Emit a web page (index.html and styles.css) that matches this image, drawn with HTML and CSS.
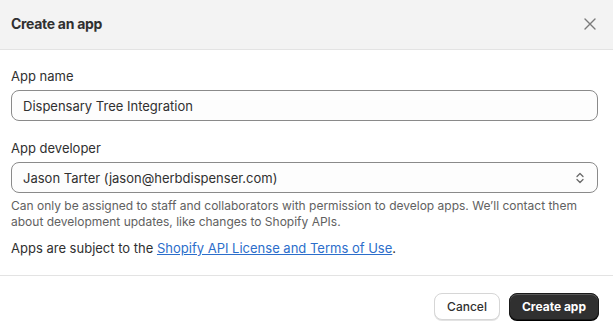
FILE: index.html
```html
<!DOCTYPE html>
<html>
<head>
<meta charset="utf-8">
<link rel="stylesheet" href="styles.css">
</head>
<body>
<div class="modal">
  <div class="header">
    <h1 class="title">Create an app</h1>
    <button class="close" aria-label="Close">
      <svg width="12" height="12" viewBox="0 0 12 12"><path d="M1 1L11 11M11 1L1 11" stroke="#7a7a7a" stroke-width="1.4" stroke-linecap="round"/></svg>
    </button>
  </div>
  <div class="body">
    <div class="field">
      <label class="label">App name</label>
      <div class="input">Dispensary Tree Integration</div>
    </div>
    <div class="field second">
      <label class="label">App developer</label>
      <div class="input select">
        <span>Jason Tarter (jason@herbdispenser.com)</span>
        <svg class="chev" width="10" height="14" viewBox="0 0 10 14"><path d="M2 5.5L5 2.5L8 5.5M2 8.5L5 11.5L8 8.5" fill="none" stroke="#6a6a6a" stroke-width="1.3" stroke-linecap="round" stroke-linejoin="round"/></svg>
      </div>
      <p class="help">Can only be assigned to staff and collaborators with permission to develop apps. We’ll contact them about development updates, like changes to Shopify APIs.</p>
    </div>
    <p class="terms">Apps are subject to the <a href="#">Shopify API License and Terms of Use</a>.</p>
  </div>
  <div class="footer">
    <button class="btn secondary">Cancel</button>
    <button class="btn primary">Create app</button>
  </div>
</div>
</body>
</html>
```
FILE: styles.css
```css
* { box-sizing: border-box; }
html, body { margin: 0; padding: 0; background: #fff; }
body {
  font-family: Inter, "Noto Sans", sans-serif;
  font-size: 13px;
  color: #303030;
  width: 613px;
  height: 331px;
  overflow: hidden;
}
.modal { display: flex; flex-direction: column; }
.header {
  height: 50px;
  background: #f3f3f3;
  border-bottom: 1px solid #e3e3e3;
  display: flex;
  align-items: center;
  justify-content: space-between;
  padding: 0 17px 2px 11px;
}
.title { margin: 0; font-size: 14px; font-weight: 650; color: #303030; letter-spacing: -0.3px; }
.close { border: 0; background: none; padding: 0; display: flex; }
.body { padding: 16px 15px 0 11px; }
.field { display: flex; flex-direction: column; }
.field.second { margin-top: 17px; }
.label { line-height: 20px; margin-bottom: 4px; color: #303030; }
.input {
  height: 31px;
  border: 1px solid #8a8a8a;
  border-radius: 8px;
  padding: 0 11px;
  display: flex;
  align-items: center;
  color: #303030;
  background: #fdfdfd;
}
.select { justify-content: space-between; padding-right: 12px; }
.help { margin: 5px 0 0; font-size: 12px; line-height: 16px; color: #616161; }
.terms { margin: 8px 0 0; line-height: 20px; }
.terms a { color: #2c6ecb; text-decoration: underline; }
.footer {
  margin-top: 17px;
  border-top: 1px solid #e3e3e3;
  display: flex;
  justify-content: flex-end;
  gap: 9px;
  padding: 17px 14px 0 0;
}
.btn {
  font-family: inherit;
  font-size: 12px;
  height: 27px;
  border-radius: 8px;
  padding: 0 12px;
  cursor: pointer;
}
.secondary {
  background: #fff;
  color: #303030;
  border: 1px solid #d6d6d6;
  box-shadow: 0 1px 0 #e3e3e3;
  font-weight: 500;
}
.primary {
  background: #303030;
  color: #fff;
  border: 1px solid #1a1a1a;
  font-weight: 650;
  box-shadow: inset 0 1px 0 rgba(255,255,255,0.2), 0 1px 0 #000;
}
```
